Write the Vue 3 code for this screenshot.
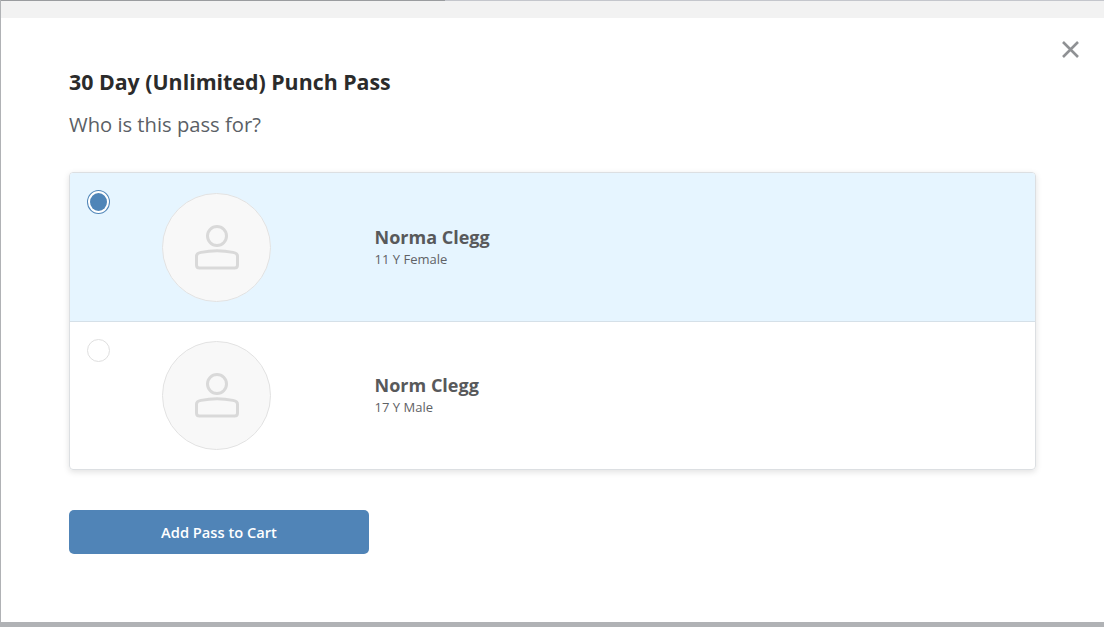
<script setup>
const people = [
  { name: 'Norma Clegg', meta: '11 Y Female', selected: true },
  { name: 'Norm Clegg', meta: '17 Y Male', selected: false }
]
</script>

<template>
  <div class="page">
    <div class="backdrop-top">
      <div class="top-dark"></div>
      <div class="top-light"></div>
    </div>
    <main class="modal">
      <button class="close" aria-label="Close">
        <svg width="19" height="19" viewBox="0 0 19 19">
          <path d="M2 2 L17 17 M17 2 L2 17" stroke="#8f9194" stroke-width="2.6" fill="none" />
        </svg>
      </button>
      <h1 class="title">30 Day (Unlimited) Punch Pass</h1>
      <p class="question">Who is this pass for?</p>
      <section class="card">
        <div
          v-for="p in people"
          :key="p.name"
          class="row"
          :class="{ selected: p.selected }"
        >
          <span class="radio"><span class="dot"></span></span>
          <span class="avatar">
            <svg width="46" height="46" viewBox="0 0 46 46">
              <circle cx="23" cy="11" r="9.5" fill="none" stroke="#d9d9d9" stroke-width="3" />
              <path
                d="M2.5 31 C2.5 29 4 28 7 27.4 C17 25.2 29 25.2 39 27.4 C42 28 43.5 29 43.5 31 L43.5 40 C43.5 42 42.5 43 40.5 43 L5.5 43 C3.5 43 2.5 42 2.5 40 Z"
                fill="none"
                stroke="#d9d9d9"
                stroke-width="3"
              />
            </svg>
          </span>
          <div class="info">
            <div class="name">{{ p.name }}</div>
            <div class="meta">{{ p.meta }}</div>
          </div>
        </div>
      </section>
      <button class="cta">Add Pass to Cart</button>
    </main>
    <div class="backdrop-bottom"></div>
  </div>
</template>

<style>
html, body { margin: 0; background: #fff; }
</style>

<style scoped>
.page {
  width: 1104px;
  height: 627px;
  display: flex;
  flex-direction: column;
  overflow: hidden;
  font-family: "Open Sans", "Noto Sans", sans-serif;
}
.backdrop-top {
  height: 18px;
  flex: none;
  background: #f2f2f2;
  border-left: 1px solid #b0b2b5;
  box-sizing: border-box;
  display: flex;
  align-items: flex-start;
}
.top-dark { width: 444px; height: 1px; background: #9a9c9f; }
.top-light { flex: 1; height: 1px; background: #c4c6cc; }
.modal {
  position: relative;
  flex: 1;
  min-height: 0;
  background: #fff;
  border-left: 1px solid #b0b2b5;
  box-sizing: border-box;
  padding: 50px 68px 0;
}
.backdrop-bottom { height: 5px; flex: none; background: #b0b2b5; }
.close {
  position: absolute;
  top: 22px;
  right: 24px;
  width: 19px;
  height: 19px;
  padding: 0;
  border: 0;
  background: none;
  display: block;
}
.close svg { display: block; }
.title {
  margin: 0;
  font-size: 21.33px;
  line-height: 27px;
  font-weight: 700;
  color: #2b2b2b;
}
.question {
  margin: 16px 0 0;
  font-size: 20.2px;
  line-height: 27px;
  font-weight: 400;
  color: #5b5f66;
}
.card {
  margin-top: 34px;
  width: 967px;
  box-sizing: border-box;
  border: 1px solid #dcdfe2;
  border-radius: 4px;
  box-shadow: 0 2px 6px rgba(0, 0, 0, 0.12);
  overflow: hidden;
}
.row {
  display: flex;
  align-items: flex-start;
  padding: 17px 0 19px 17px;
}
.row.selected {
  background: #e6f5ff;
  border-bottom: 1px solid #d5e0e8;
}
.radio {
  flex: none;
  width: 23px;
  height: 23px;
  box-sizing: border-box;
  border: 1px solid #dfdfdf;
  border-radius: 50%;
  background: #fff;
  display: flex;
  align-items: center;
  justify-content: center;
}
.row.selected .radio { border-color: #4f85b8; height: 24px; }
.dot { width: 17px; height: 17px; border-radius: 50%; }
.row.selected .dot { background: #4f85b8; height: 18px; }
.avatar {
  flex: none;
  margin: 2px 0 0 52px;
  width: 109px;
  height: 109px;
  box-sizing: border-box;
  border: 1px solid #e2e2e2;
  border-radius: 50%;
  background: #f8f8f8;
  display: flex;
  align-items: center;
  justify-content: center;
}
.row.selected .avatar { margin-top: 3px; }
.avatar svg { display: block; }
.info { margin: 34px 0 0 103.6px; }
.row.selected .info { margin-top: 35px; }
.name {
  font-size: 18px;
  line-height: 24px;
  font-weight: 700;
  color: #58595b;
}
.meta {
  margin-top: 1px;
  font-size: 13px;
  line-height: 18px;
  color: #5f6266;
}
.cta {
  display: block;
  margin-top: 40px;
  width: 300px;
  height: 44px;
  border: 0;
  border-radius: 5px;
  background: #5084b7;
  color: #fff;
  font-family: inherit;
  font-size: 14.67px;
  font-weight: 600;
}
</style>
